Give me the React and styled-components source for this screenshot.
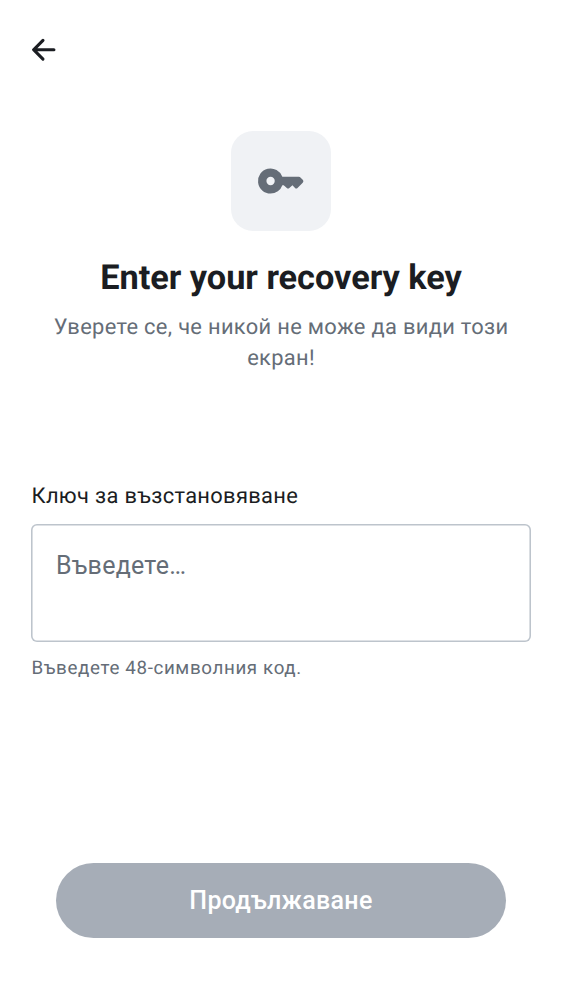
import React from "react";
import styled, { createGlobalStyle } from "styled-components";

const GlobalStyle = createGlobalStyle`
  *, *::before, *::after { box-sizing: border-box; }
  body {
    margin: 0;
    background: #ffffff;
    font-family: Roboto, "Noto Sans", sans-serif;
    text-rendering: geometricPrecision;
  }
`;

const Screen = styled.div`
  display: flex;
  flex-direction: column;
  min-height: 1000px;
  color: #1b1d22;
`;

const TopBar = styled.header`
  display: flex;
  align-items: center;
  height: 100px;
  padding: 0 25px;
`;

const BackButton = styled.button`
  display: flex;
  padding: 0;
  border: 0;
  background: none;
  color: inherit;
`;

const Header = styled.section`
  display: flex;
  flex-direction: column;
  align-items: center;
  padding: 31px 31px 0;
  text-align: center;
`;

const IconTile = styled.div`
  display: flex;
  align-items: center;
  justify-content: center;
  width: 100px;
  height: 100px;
  border-radius: 22px;
  background: #f0f2f5;
  color: #656d77;
`;

const Title = styled.h1`
  margin: 25px 0 0;
  font-size: 34.35px;
  line-height: 44px;
  font-weight: 700;
  letter-spacing: -0.04px;
`;

const Subtitle = styled.p`
  margin: 12px 0 0;
  font-size: 21.86px;
  line-height: 31.2px;
  letter-spacing: 0.32px;
  color: #656d77;
`;

const Form = styled.main`
  display: flex;
  flex-direction: column;
  flex: 1;
  padding: 107px 31px 0;
`;

const Label = styled.label`
  padding-left: 0.5px;
  font-size: 21.86px;
  line-height: 31px;
  letter-spacing: 0.34px;
`;

const KeyInput = styled.textarea`
  display: block;
  width: 100%;
  height: 118px;
  margin: 11.5px 0 11.5px;
  padding: 23px 25px;
  border: 0;
  box-shadow: inset 0 0 0 1.56px #bdc4cc;
  border-radius: 6px;
  background: transparent;
  resize: none;
  outline: none;
  font: 25px/37.5px Roboto, "Noto Sans", sans-serif;
  letter-spacing: 0.25px;
  color: inherit;

  &::placeholder {
    color: #656d77;
    opacity: 1;
  }
`;

const Hint = styled.p`
  margin: 0;
  padding-left: 0.5px;
  font-size: 18.75px;
  line-height: 31px;
  letter-spacing: 0.64px;
  color: #656d77;
`;

const Footer = styled.footer`
  padding: 0 56px 62.5px;
`;

const ContinueButton = styled.button`
  display: block;
  width: 100%;
  height: 75px;
  padding: 1px 0 0;
  border: 0;
  border-radius: 38px;
  background: #a6adb7;
  color: #ffffff;
  font: 500 25px/37.5px Roboto, "Noto Sans", sans-serif;
  letter-spacing: 0.3px;
`;

const BackIcon = () => (
  <svg width="37.5" height="37.5" viewBox="0 0 24 24" fill="currentColor" aria-hidden="true">
    <path d="M12.207 5.293a1 1 0 0 1 0 1.414L7.914 11H18.5a1 1 0 1 1 0 2H7.914l4.293 4.293a1 1 0 0 1-1.414 1.414l-6-6a1 1 0 0 1 0-1.414l6-6a1 1 0 0 1 1.414 0Z" />
  </svg>
);

const KeyIcon = () => (
  <svg width="50" height="50" viewBox="0 0 24 24" fill="currentColor" fillRule="evenodd" aria-hidden="true">
    <path d="M7 18.05A6.02 6.02 0 1 1 12.65 10h7.95q.2 0 .388.075.187.075.337.225l1.1 1.1q.3.3.3.7t-.3.7l-2.5 2.5q-.25.25-.6.25t-.6-.25L17.5 14l-1.5 1.4q-.3.25-.6.25t-.6-.25L13.3 14h-.65A6 6 0 0 1 7 18.05Zm0-4.05a2 2 0 1 0 0-4 2 2 0 0 0 0 4Z" />
  </svg>
);

export default function App() {
  return (
    <>
      <GlobalStyle />
      <Screen>
        <TopBar>
          <BackButton type="button" aria-label="Back">
            <BackIcon />
          </BackButton>
        </TopBar>
        <Header>
          <IconTile>
            <KeyIcon />
          </IconTile>
          <Title>Enter your recovery key</Title>
          <Subtitle>Уверете се, че никой не може да види този екран!</Subtitle>
        </Header>
        <Form>
          <Label htmlFor="recovery-key">Ключ за възстановяване</Label>
          <KeyInput id="recovery-key" placeholder="Въведете…" />
          <Hint>Въведете 48-символния код.</Hint>
        </Form>
        <Footer>
          <ContinueButton type="button">Продължаване</ContinueButton>
        </Footer>
      </Screen>
    </>
  );
}
